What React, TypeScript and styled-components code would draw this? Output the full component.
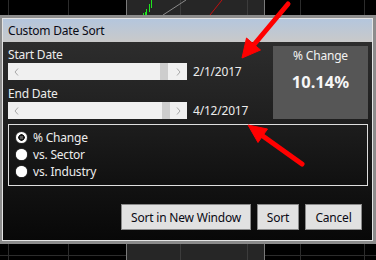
import React from 'react';
import styled, { createGlobalStyle } from 'styled-components';

const Global = createGlobalStyle`
  html, body { margin: 0; padding: 0; background: #000; }
  body {
    width: 376px; height: 260px; overflow: hidden;
    font-family: "Noto Sans", "Open Sans", sans-serif;
    -webkit-font-smoothing: antialiased;
  }
  * { box-sizing: border-box; }
`;

const Stage = styled.div`
  position: relative;
  width: 376px;
  height: 260px;
  background: #000;
  padding-top: 15px;
`;

const Backdrop = styled.svg`
  position: absolute;
  left: 0;
  top: 0;
  z-index: 0;
`;

const Overlay = styled.svg`
  position: absolute;
  left: 0;
  top: 0;
  z-index: 2;
  pointer-events: none;
`;

const Dialog = styled.div`
  position: relative;
  z-index: 1;
  width: 376px;
  height: 229px;
  border-style: solid;
  border-color: #8c8c8c;
  border-width: 3px 3px 3px 2px;
  display: flex;
`;

const Frame = styled.div`
  flex: 1;
  border: 1px solid #e4e4e4;
  display: flex;
  flex-direction: column;
`;

const TitleBar = styled.div`
  height: 23px;
  background: linear-gradient(#b4c6dd, #c9c9c9);
  display: flex;
  align-items: center;
  padding-left: 5px;
  font-size: 12px;
  letter-spacing: -0.2px;
  color: #0a0a14;
`;

const Client = styled.div`
  flex: 1;
  background: linear-gradient(#2d2d2d, #080808);
  padding: 4px 4px 10px 5px;
  display: flex;
  flex-direction: column;
  color: #ececec;
  font-size: 12px;
  letter-spacing: -0.2px;
`;

const TopRow = styled.div`
  display: flex;
`;

const Fields = styled.div`
  flex: 1;
  display: flex;
  flex-direction: column;
`;

const Label = styled.div<{ $gap?: number }>`
  height: 17px;
  line-height: 17px;
  margin-top: ${p => p.$gap ?? 0}px;
`;

const SliderRow = styled.div`
  display: flex;
  align-items: center;
  gap: 6px;
  height: 17px;
`;

const Scroll = styled.div`
  width: 179px;
  height: 17px;
  background: #f0f0f0;
  display: flex;
`;

const ArrowBtn = styled.div`
  width: 17px;
  height: 17px;
  display: flex;
  align-items: center;
  justify-content: center;
`;

const Track = styled.div`
  flex: 1;
  display: flex;
`;

const Thumb = styled.div<{ $offset: number }>`
  margin-left: ${p => p.$offset}px;
  width: 8px;
  height: 17px;
  background: #cdcdcd;
`;

const DateText = styled.span`
  color: #ececec;
`;

const Panel = styled.div`
  width: 95px;
  height: 73px;
  background: #565656;
  display: flex;
  flex-direction: column;
  align-items: center;
  padding-top: 1px;
`;

const PanelTitle = styled.div`
  font-size: 12px;
  line-height: 18px;
  color: #f2f2f2;
`;

const PanelValue = styled.div`
  margin-top: 5px;
  font-size: 16.5px;
  font-weight: 700;
  letter-spacing: 0;
  color: #f6f6f6;
`;

const Group = styled.div`
  margin-top: 5px;
  height: 62px;
  border: 1px solid #dedede;
  background: linear-gradient(#1d1d1d, #101010);
  padding: 4px 0 5px 7px;
  display: flex;
  flex-direction: column;
`;

const RadioRow = styled.div`
  height: 17px;
  display: flex;
  align-items: center;
  gap: 6px;
`;

const Radio = styled.span<{ $checked?: boolean }>`
  width: 11px;
  height: 11px;
  border-radius: 50%;
  background: ${p =>
    p.$checked
      ? 'radial-gradient(circle, #5a5a5a 0 1.5px, #1a1a1a 2px 3px, #fff 3.5px)'
      : '#fff'};
  box-shadow: 0 0 1px #fff;
`;

const Buttons = styled.div`
  margin-top: auto;
  display: flex;
  justify-content: flex-end;
  gap: 6px;
  padding-right: 6px;
`;

const Button = styled.button<{ $w: number }>`
  width: ${p => p.$w}px;
  height: 26px;
  background: #e1e1e1;
  border: 1px solid #8a8a8a;
  font-family: "Noto Sans", "Open Sans", sans-serif;
  font-size: 12px;
  letter-spacing: -0.2px;
  color: #0a0a14;
  padding: 0;
`;

const Chevron = ({ dir }: { dir: 'l' | 'r' }) => (
  <svg width="5" height="8" viewBox="0 0 5 8">
    <polyline
      points={dir === 'l' ? '4,0.5 1,4 4,7.5' : '1,0.5 4,4 1,7.5'}
      fill="none"
      stroke="#a8a8a8"
      strokeWidth="1"
    />
  </svg>
);

const Slider = ({ offset }: { offset: number }) => (
  <Scroll>
    <ArrowBtn><Chevron dir="l" /></ArrowBtn>
    <Track><Thumb $offset={offset} /></Track>
    <ArrowBtn><Chevron dir="r" /></ArrowBtn>
  </Scroll>
);

const gridX = [8, 68, 300, 364];

const ChartBackdrop = () => (
  <Backdrop width="376" height="260" viewBox="0 0 376 260">
    {gridX.map(x => (
      <line key={x} x1={x + 0.5} y1="0" x2={x + 0.5} y2="260" stroke="#2c2c2c" strokeWidth="1" />
    ))}
    <line x1="0" y1="255.5" x2="376" y2="255.5" stroke="#2c2c2c" strokeWidth="1" />
    <rect x="126" y="0" width="139" height="260" fill="#262626" />
    <line x1="126.5" y1="0" x2="126.5" y2="260" stroke="#7a7a7a" />
    <line x1="264.5" y1="0" x2="264.5" y2="260" stroke="#7a7a7a" />
    <line x1="180.5" y1="0" x2="180.5" y2="260" stroke="#3c3c3c" />
    <line x1="247.5" y1="0" x2="247.5" y2="260" stroke="#3c3c3c" />
    <line x1="163" y1="15" x2="186" y2="0" stroke="#8a8a8a" strokeWidth="1" />
    <line x1="210" y1="15" x2="222" y2="0" stroke="#c01010" strokeWidth="1" />
    <g stroke="#1fe61f" strokeWidth="1">
      <line x1="143.5" y1="13" x2="143.5" y2="15" />
      <line x1="145.5" y1="12" x2="145.5" y2="15" />
      <line x1="146.5" y1="9" x2="146.5" y2="15" />
      <line x1="149.5" y1="4" x2="149.5" y2="12" />
      <line x1="151.5" y1="0" x2="151.5" y2="8" />
    </g>
  </Backdrop>
);

const Arrows = () => (
  <Overlay width="376" height="260" viewBox="0 0 376 260">
    <g fill="#f00" stroke="#f00">
      <line x1="288" y1="4" x2="252" y2="47" strokeWidth="5" strokeLinecap="round" />
      <polygon points="242,58 260.5,50 246.5,38" strokeWidth="1" strokeLinejoin="round" />
      <line x1="302" y1="164" x2="260" y2="134" strokeWidth="5" strokeLinecap="round" />
      <polygon points="248,125 267.5,129 258,142.5" strokeWidth="1" strokeLinejoin="round" />
    </g>
  </Overlay>
);

export default function App() {
  return (
    <Stage>
      <Global />
      <ChartBackdrop />
      <Dialog>
        <Frame>
          <TitleBar>Custom Date Sort</TitleBar>
          <Client>
            <TopRow>
              <Fields>
                <Label>Start Date</Label>
                <SliderRow>
                  <Slider offset={135} />
                  <DateText>2/1/2017</DateText>
                </SliderRow>
                <Label $gap={5}>End Date</Label>
                <SliderRow>
                  <Slider offset={137} />
                  <DateText>4/12/2017</DateText>
                </SliderRow>
              </Fields>
              <Panel>
                <PanelTitle>% Change</PanelTitle>
                <PanelValue>10.14%</PanelValue>
              </Panel>
            </TopRow>
            <Group>
              <RadioRow><Radio $checked />% Change</RadioRow>
              <RadioRow><Radio />vs. Sector</RadioRow>
              <RadioRow><Radio />vs. Industry</RadioRow>
            </Group>
            <Buttons>
              <Button $w={130}>Sort in New Window</Button>
              <Button $w={42}>Sort</Button>
              <Button $w={57}>Cancel</Button>
            </Buttons>
          </Client>
        </Frame>
      </Dialog>
      <Arrows />
    </Stage>
  );
}
